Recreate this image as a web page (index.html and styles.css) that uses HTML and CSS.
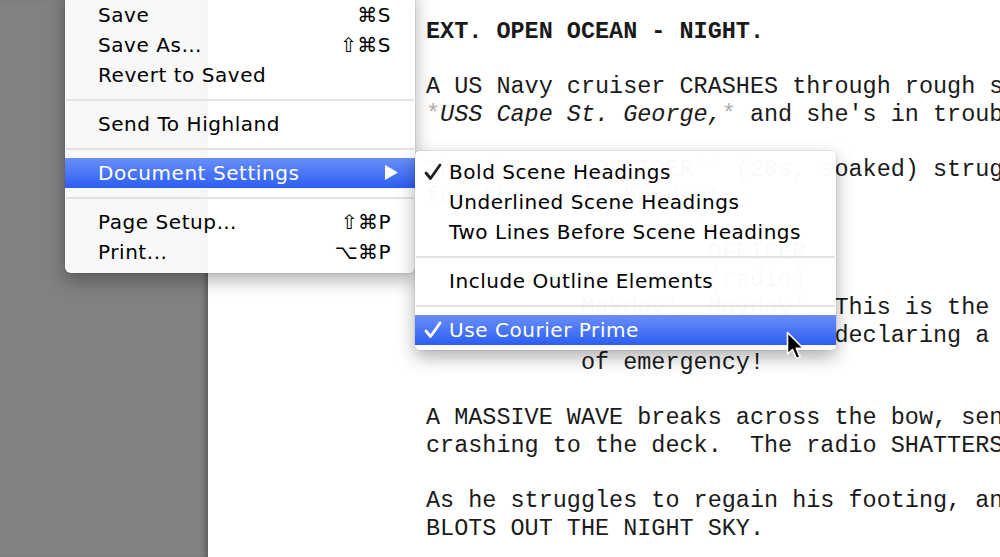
FILE: index.html
```html
<!DOCTYPE html>
<html>
<head>
<meta charset="utf-8">
<link rel="stylesheet" href="styles.css">
</head>
<body>
<div class="screen">
  <aside class="sidebar"></aside>
  <main class="doc">
<pre class="script"><b>EXT. OPEN OCEAN - NIGHT.</b>

A US Navy cruiser CRASHES through rough seas.  The
<span class="mk">*</span><i>USS Cape St. George,</i><span class="mk">*</span> and she's in trouble.

The <span class="mk">**</span>RADIO OFFICER<span class="mk">**</span> (20s, soaked) struggles
for the radio handset.

                    OFFICER
                    (radio)
           Mayday!  Mayday!  This is the
           Cape St. George - declaring a state
           of emergency!

A MASSIVE WAVE breaks across the bow, sending him
crashing to the deck.  The radio SHATTERS.

As he struggles to regain his footing, an enormous shape
BLOTS OUT THE NIGHT SKY.</pre>
  </main>

  <div class="menu main-menu">
    <div class="item"><span class="label">Save</span><span class="key">⌘S</span></div>
    <div class="item"><span class="label">Save As…</span><span class="key">⇧⌘S</span></div>
    <div class="item"><span class="label">Revert to Saved</span></div>
    <div class="sep"></div>
    <div class="item"><span class="label">Send To Highland</span></div>
    <div class="sep"></div>
    <div class="item active"><span class="label">Document Settings</span>
      <svg class="arrow" width="13" height="15" viewBox="0 0 13 15"><path d="M0 0 L13 7.5 L0 15 Z" fill="#fff"/></svg>
    </div>
    <div class="sep"></div>
    <div class="item"><span class="label">Page Setup…</span><span class="key">⇧⌘P</span></div>
    <div class="item"><span class="label">Print...</span><span class="key">⌥⌘P</span></div>
  </div>

  <div class="menu sub-menu">
    <div class="item"><svg class="check" width="18" height="18" viewBox="0 0 18 18"><path d="M2 10 L6.5 15.5 L16 2" fill="none" stroke="#222" stroke-width="2.8" stroke-linecap="round" stroke-linejoin="round"/></svg><span class="label">Bold Scene Headings</span></div>
    <div class="item"><span class="label">Underlined Scene Headings</span></div>
    <div class="item"><span class="label">Two Lines Before Scene Headings</span></div>
    <div class="sep"></div>
    <div class="item"><span class="label">Include Outline Elements</span></div>
    <div class="sep"></div>
    <div class="item active"><svg class="check" width="18" height="18" viewBox="0 0 18 18"><path d="M2 10 L6.5 15.5 L16 2" fill="none" stroke="#fff" stroke-width="2.8" stroke-linecap="round" stroke-linejoin="round"/></svg><span class="label">Use Courier Prime</span></div>
  </div>

  <svg class="cursor" width="22" height="32" viewBox="0 0 22 32">
    <path d="M1.5 1.5 L1.5 23 L6.5 18.5 L10.5 27.5 L14 26 L10.2 17.2 L17 17 Z" fill="#000" stroke="#fff" stroke-width="1.6" stroke-linejoin="round"/>
  </svg>
</div>
</body>
</html>
```

FILE: styles.css
```css
html, body {
  margin: 0;
  padding: 0;
}

body {
  width: 1000px;
  height: 557px;
  overflow: hidden;
  background: #808080;
}

.screen {
  position: relative;
  display: flex;
  width: 1000px;
  height: 557px;
  overflow: hidden;
}

.sidebar {
  width: 208px;
  flex: none;
  background: #818181;
  box-shadow: inset -6px 0 5px -3px rgba(0, 0, 0, 0.28);
}

.doc {
  flex: 1;
  background: #fff;
  padding: 18px 0 0 218px;
  overflow: hidden;
}

.script {
  margin: 0;
  font-family: "Liberation Mono", "Courier New", monospace;
  font-size: 23.47px;
  line-height: 27.6px;
  color: #1a1a1a;
  white-space: pre;
}

.script b {
  font-weight: bold;
}

.script i {
  font-style: italic;
}

.script .mk {
  color: #b0b0b0;
}

.menu {
  position: absolute;
  font-family: "DejaVu Sans", "Lucida Grande", sans-serif;
  font-size: 20px;
  letter-spacing: 0.55px;
  color: #000;
  box-shadow: 0 7px 18px rgba(0, 0, 0, 0.32), 0 0 0 1px rgba(0, 0, 0, 0.06);
}

.main-menu {
  left: 65px;
  top: -10px;
  width: 350px;
  padding: 10px 0 6px;
  border-radius: 0 0 6px 6px;
  background: rgba(255, 255, 255, 0.94);
}

.sub-menu {
  left: 415px;
  top: 151px;
  width: 421px;
  padding: 6px 0 5px;
  border-radius: 5px;
  background: rgba(255, 255, 255, 0.975);
}

.item {
  position: relative;
  display: flex;
  align-items: center;
  height: 30px;
  white-space: nowrap;
}

.main-menu .item {
  padding: 0 24px 0 33px;
}

.sub-menu .item {
  padding: 0 20px 0 34px;
}

.label {
  flex: 1;
}

.key {
  letter-spacing: 0.5px;
}

.item.active {
  background: linear-gradient(#6a8ef8, #2c5ef3);
  color: #fff;
}

.arrow {
  position: absolute;
  right: 17px;
  top: 7px;
}

.check {
  position: absolute;
  left: 9px;
  top: 6px;
}

.sep {
  height: 19px;
  position: relative;
}

.sep::after {
  content: "";
  position: absolute;
  left: 1px;
  right: 1px;
  top: 9px;
  height: 2px;
  background: #e2e2e2;
}

.cursor {
  position: absolute;
  left: 786px;
  top: 331px;
}
```
